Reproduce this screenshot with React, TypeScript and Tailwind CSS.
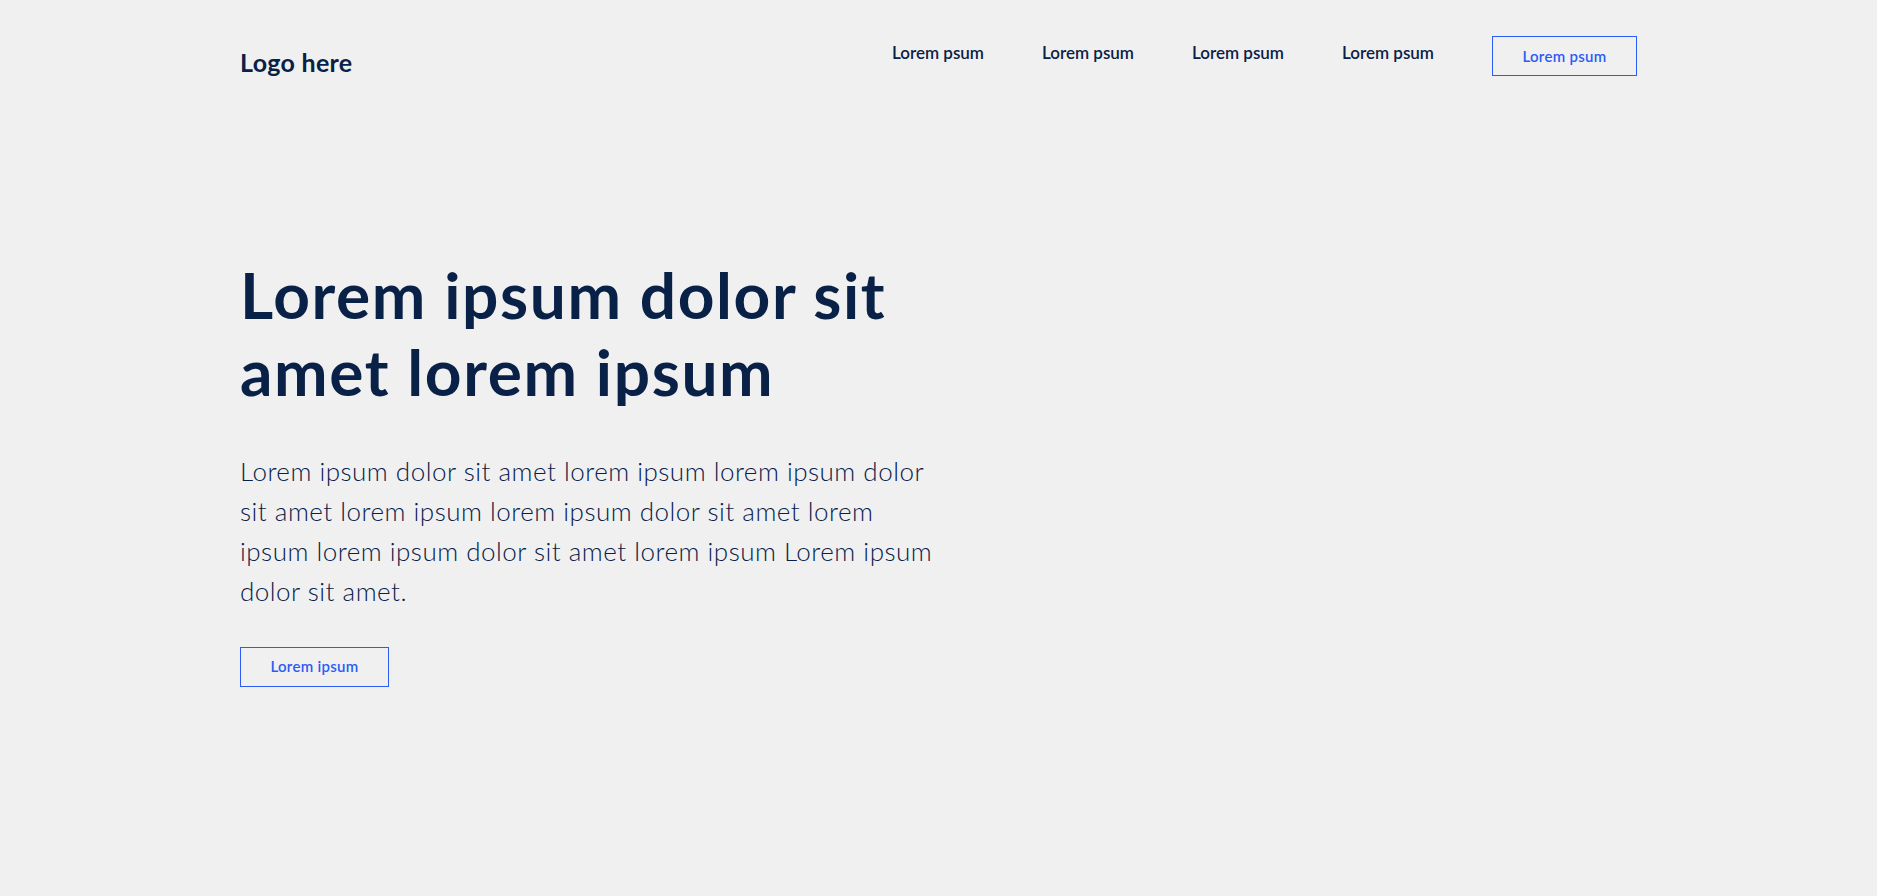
const navItems = ['Lorem psum', 'Lorem psum', 'Lorem psum', 'Lorem psum']

export default function App() {
  return (
    <div className="min-h-screen bg-[#f0f0f0] px-[240px] font-['Lato',sans-serif] text-[#0a2147]">
      <header className="flex items-start justify-between pt-[36px]">
        <a href="#" className="mt-[11px] text-[25px] font-bold leading-[30px] tracking-[0.3px]">
          Logo here
        </a>
        <nav className="flex items-start gap-[62px]">
          {navItems.map((item, i) => (
            <a
              key={i}
              href="#"
              className="mt-[5px] w-[88px] whitespace-nowrap text-[17px] font-semibold leading-[24px]"
            >
              {item}
            </a>
          ))}
          <button className="flex h-[40px] w-[145px] items-center justify-center border border-[#2c5cf6] text-[15px] font-semibold tracking-[0.3px] text-[#2c5cf6]">
            Lorem psum
          </button>
        </nav>
      </header>

      <section className="mt-[180px] max-w-[705px]">
        <h1 className="text-[64px] font-bold leading-[1.2] tracking-[0.025em]">
          Lorem ipsum dolor sit
          <br />
          amet lorem ipsum
        </h1>
        <p className="mt-[40px] text-[26px] font-light leading-[40px] tracking-[0.5px] text-[#08204a]">
          Lorem ipsum dolor sit amet lorem ipsum lorem ipsum dolor sit amet
          lorem ipsum lorem ipsum dolor sit amet lorem ipsum lorem ipsum dolor
          sit amet lorem ipsum Lorem ipsum dolor sit amet.
        </p>
        <button className="mt-[36px] flex h-[40px] w-[149px] items-center justify-center border border-[#2c5cf6] text-[15px] font-semibold tracking-[0.3px] text-[#2c5cf6]">
          Lorem ipsum
        </button>
      </section>
    </div>
  )
}
